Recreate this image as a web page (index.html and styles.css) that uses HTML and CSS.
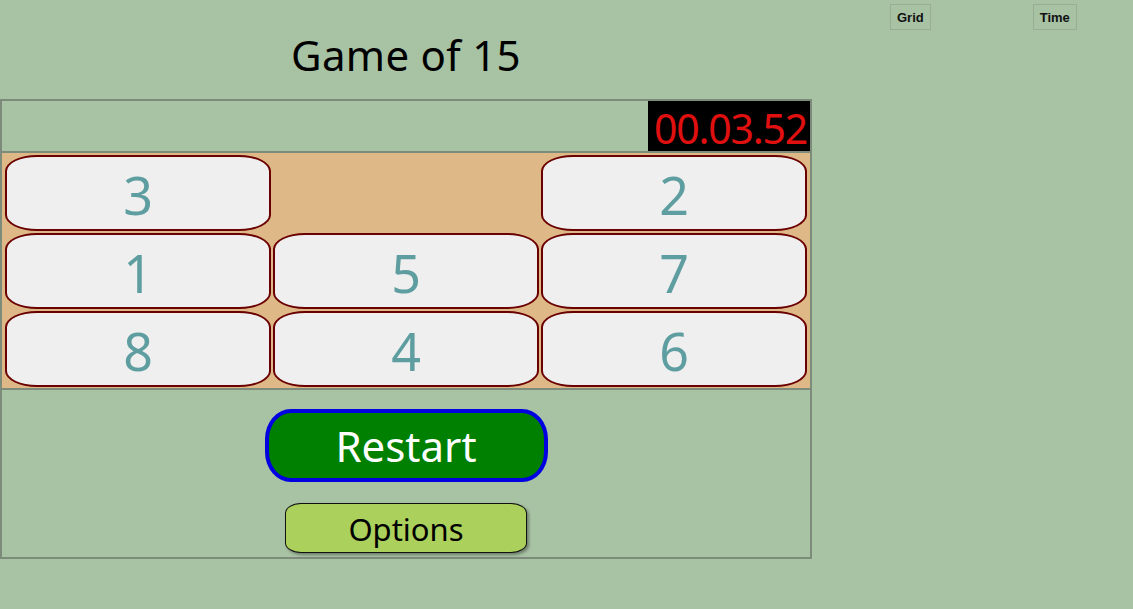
FILE: index.html
```html
<!DOCTYPE html>
<html>
<head>
<meta charset="utf-8">
<title>Game of 15</title>
<link rel="stylesheet" href="styles.css">
</head>
<body>
<div class="page">
  <div class="app">
    <h1 class="title">Game of 15</h1>
    <div class="board">
      <div class="header">
        <div class="timer">00.03.52</div>
      </div>
      <div class="grid">
        <div class="tile">3</div>
        <div class="tile empty"></div>
        <div class="tile">2</div>
        <div class="tile">1</div>
        <div class="tile">5</div>
        <div class="tile">7</div>
        <div class="tile">8</div>
        <div class="tile">4</div>
        <div class="tile">6</div>
      </div>
      <div class="controls">
        <button class="restart">Restart</button>
        <button class="options">Options</button>
      </div>
    </div>
  </div>
  <div class="side">
    <button class="small grid-btn">Grid</button>
    <button class="small time-btn">Time</button>
  </div>
</div>
</body>
</html>
```
FILE: styles.css
```css
html, body {
  margin: 0;
  padding: 0;
  background: #a8c2a4;
  height: 100%;
}
body {
  font-family: "Noto Sans", "Open Sans", sans-serif;
}
.page {
  display: flex;
  align-items: flex-start;
}
.app {
  width: 812px;
}
.title {
  margin: 0;
  height: 99px;
  box-sizing: border-box;
  padding-top: 27px;
  text-align: center;
  font-weight: normal;
  font-size: 42px;
  line-height: 56px;
  letter-spacing: 0.3px;
  color: #000;
}
.board {
  border: 2px solid #7d8b7a;
  box-sizing: border-box;
  width: 812px;
}
.header {
  height: 50px;
  display: flex;
  justify-content: flex-end;
  border-bottom: 2px solid #7d8b7a;
}
.timer {
  width: 162px;
  height: 50px;
  background: #000;
  color: #e01010;
  font-size: 41px;
  line-height: 54px;
  text-align: right;
  padding-right: 3px;
  box-sizing: border-box;
  letter-spacing: -1.2px;
  white-space: nowrap;
}
.grid {
  background: #deb887;
  display: grid;
  grid-template-columns: repeat(3, 266px);
  grid-auto-rows: 76px;
  column-gap: 2px;
  row-gap: 2px;
  padding: 2px 2px 2px 3px;
  border-bottom: 2px solid #7d8b7a;
  height: 237px;
  box-sizing: border-box;
}
.tile {
  background: #efefef;
  border: 2px solid #6b0000;
  border-radius: 32px / 16px;
  color: #5f9ea0;
  font-size: 52px;
  line-height: 76px;
  text-align: center;
  box-sizing: border-box;
}
.tile.empty {
  visibility: hidden;
}
.controls {
  height: 167px;
  display: flex;
  flex-direction: column;
  align-items: center;
  padding-top: 19px;
  box-sizing: border-box;
}
.restart {
  width: 283px;
  height: 73px;
  background: #008000;
  border: 4px solid #0000e0;
  border-radius: 26px / 30px;
  color: #fff;
  font-family: "Noto Sans", "Open Sans", sans-serif;
  font-size: 42px;
  line-height: 62px;
  padding: 0;
  margin: 0;
}
.options {
  margin-top: 21px;
  width: 242px;
  height: 50px;
  background: #acd05c;
  border: 1px solid #111;
  border-radius: 16px / 10px;
  box-shadow: 2px 2px 3px rgba(0,0,0,0.35);
  color: #000;
  font-family: "Noto Sans", "Open Sans", sans-serif;
  font-size: 31px;
  line-height: 50px;
  padding: 0;
}
.side {
  display: flex;
  padding-top: 4px;
  padding-left: 78px;
  gap: 102px;
}
.small {
  height: 26px;
  padding: 0 6px;
  background: #a8c2a4;
  border: 1px solid #97ae93;
  font-family: "Liberation Sans", Arial, sans-serif;
  font-weight: bold;
  font-size: 13px;
  color: #111;
}
```
